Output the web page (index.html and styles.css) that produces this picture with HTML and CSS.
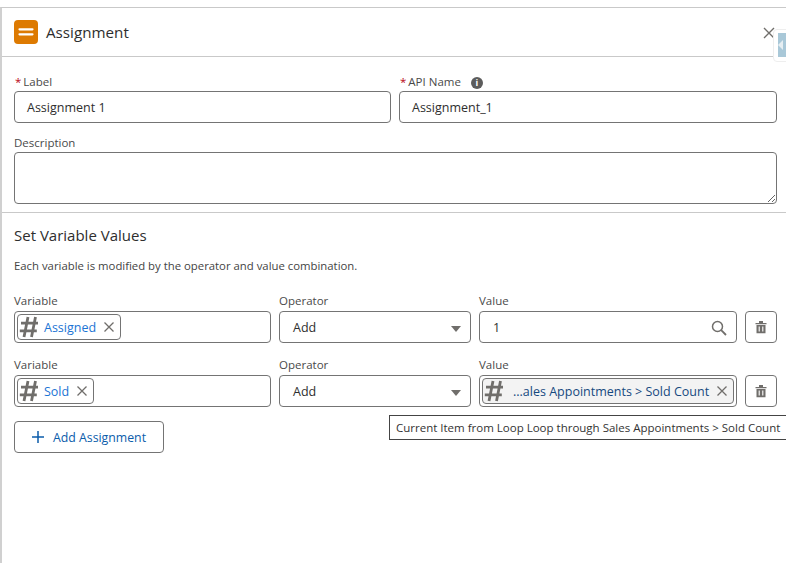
FILE: index.html
```html
<!DOCTYPE html>
<html lang="en">
<head>
<meta charset="utf-8">
<title>Assignment</title>
<link rel="stylesheet" href="styles.css">
</head>
<body>
<main class="panel">
  <header class="head">
    <span class="badge"><svg width="24" height="24" viewBox="0 0 24 24"><path d="M5.500 9.300h13M5.500 14.300h13" stroke="#fff" stroke-width="2.200" stroke-linecap="round"/></svg></span>
    <h1 class="title">Assignment</h1>
    <svg class="close" width="12" height="12" viewBox="0 0 12 12"><path d="M1 1l10 10M11 1L1 11" stroke="#706e6b" stroke-width="1.400"/></svg>
  </header>
  <div class="side-tab"><span class="side-inner"></span></div>

  <section class="basics">
    <div class="two">
      <div class="field">
        <div class="lab"><span class="req">*</span>Label</div>
        <div class="box">Assignment 1</div>
      </div>
      <div class="field">
        <div class="lab"><span class="req">*</span>API Name<span class="info">i</span></div>
        <div class="box">Assignment_1</div>
      </div>
    </div>
    <div class="field desc">
      <div class="lab">Description</div>
      <textarea class="area"></textarea>
    </div>
  </section>

  <section class="values">
    <h2 class="sub">Set Variable Values</h2>
    <p class="note">Each variable is modified by the operator and value combination.</p>

    <div class="row">
      <div class="field">
        <div class="lab">Variable</div>
        <div class="box pillbox">
          <span class="pill"><svg class="hash" width="20" height="22" viewBox="0 0 20 22"><path d="M9 1 5 21M16.500 1l-4 20M2 7.200h17M.8 14.800h17" stroke="#706e6b" stroke-width="2.800" fill="none"/></svg><span class="pill-text">Assigned</span><svg class="x" width="10" height="10" viewBox="0 0 10 10"><path d="M.5.5l9 9M9.500.5l-9 9" stroke="#706e6b" stroke-width="1.300"/></svg></span>
        </div>
      </div>
      <div class="field">
        <div class="lab">Operator</div>
        <div class="box select">Add<span class="caret"></span></div>
      </div>
      <div class="field">
        <div class="lab">Value</div>
        <div class="box select">1<svg class="search" width="16" height="16" viewBox="0 0 16 16"><circle cx="6.500" cy="6.500" r="5" fill="none" stroke="#706e6b" stroke-width="1.500"/><path d="M10.200 10.200l4.800 4.800" stroke="#706e6b" stroke-width="1.800"/></svg></div>
      </div>
      <button class="trash" type="button"><svg width="14" height="14" viewBox="0 0 14 14"><path d="M1.500 3h11v1.300h-11zM5 1h4v2H5zM2.500 5h9v8.200h-9z" fill="#706e6b"/><path d="M5.200 6.500v5M8.800 6.500v5" stroke="#fff" stroke-width="1.100"/></svg></button>
    </div>

    <div class="row">
      <div class="field">
        <div class="lab">Variable</div>
        <div class="box pillbox">
          <span class="pill"><svg class="hash" width="20" height="22" viewBox="0 0 20 22"><path d="M9 1 5 21M16.500 1l-4 20M2 7.200h17M.8 14.800h17" stroke="#706e6b" stroke-width="2.800" fill="none"/></svg><span class="pill-text">Sold</span><svg class="x" width="10" height="10" viewBox="0 0 10 10"><path d="M.5.5l9 9M9.500.5l-9 9" stroke="#706e6b" stroke-width="1.300"/></svg></span>
        </div>
      </div>
      <div class="field">
        <div class="lab">Operator</div>
        <div class="box select">Add<span class="caret"></span></div>
      </div>
      <div class="field">
        <div class="lab">Value</div>
        <div class="box pillbox">
          <span class="pill pill-full"><svg class="hash" width="20" height="22" viewBox="0 0 20 22"><path d="M9 1 5 21M16.500 1l-4 20M2 7.200h17M.8 14.800h17" stroke="#706e6b" stroke-width="2.800" fill="none"/></svg><span class="pill-text dark">...ales Appointments &gt; Sold Count</span><svg class="x" width="10" height="10" viewBox="0 0 10 10"><path d="M.5.5l9 9M9.500.5l-9 9" stroke="#706e6b" stroke-width="1.300"/></svg></span>
        </div>
      </div>
      <button class="trash" type="button"><svg width="14" height="14" viewBox="0 0 14 14"><path d="M1.500 3h11v1.300h-11zM5 1h4v2H5zM2.500 5h9v8.200h-9z" fill="#706e6b"/><path d="M5.200 6.500v5M8.800 6.500v5" stroke="#fff" stroke-width="1.100"/></svg></button>
    </div>

    <button class="add" type="button"><svg width="14" height="14" viewBox="0 0 14 14"><path d="M7 1v12M1 7h12" stroke="#0b5cab" stroke-width="1.500"/></svg>Add Assignment</button>
    <div class="tooltip">Current Item from Loop Loop through Sales Appointments &gt; Sold Count</div>
  </section>
</main>
</body>
</html>
```

FILE: styles.css
```css
* { box-sizing: border-box; }
html, body { margin: 0; height: 100%; overflow: hidden; background: #fff; }
body {
  font-family: "Open Sans", "Noto Sans", sans-serif;
  font-size: 12px;
  color: #2e2e2e;
  padding-top: 7px;
}
.panel {
  position: relative;
  height: 556px;
  border-top: 1px solid #c9c9c9;
  border-left: 2px solid #d0d0d0;
}
.head {
  height: 49px;
  border-bottom: 1px solid #c9c9c9;
  display: flex;
  align-items: center;
  padding: 0 12px;
  gap: 8px;
}
.badge {
  width: 24px;
  height: 24px;
  background: #dd7a01;
  border-radius: 4px;
  display: block;
}
.badge svg { display: block; }
.title { margin: 0; font-size: 15.200px; font-weight: 400; color: #2e2e2e; }
.close { position: absolute; right: 11px; top: 19px; }
.side-tab {
  position: absolute;
  right: -7px;
  top: 21px;
  width: 20px;
  height: 33px;
  background: #fff;
  border: 1px solid #eee;
  border-radius: 4px;
  padding: 3px 0 0 4px;
}
.side-inner {
  display: block;
  width: 16px;
  height: 24px;
  background: #a9c8d8;
}
.side-inner::before {
  content: "";
  display: block;
  width: 0;
  height: 0;
  transform: translateY(7px);
  border-top: 5px solid transparent;
  border-bottom: 5px solid transparent;
  border-right: 5px solid #e6eef2;
}
.basics {
  padding: 16px 8px 8px 12px;
  border-bottom: 1px solid #c9c9c9;
  height: 156px;
}
.two { display: grid; grid-template-columns: 377px 378px; gap: 8px; }
.lab {
  height: 18px;
  font-size: 11.500px;
  line-height: 18px;
  color: #4a4a4a;
  white-space: nowrap;
}
.row .lab { height: 19px; }
.req { color: #ba0517; margin: 0 2px 0 1px; }
.info {
  display: inline-block;
  width: 12px;
  height: 12px;
  margin-left: 10px;
  border-radius: 50%;
  background: #5c5c5c;
  color: #fff;
  font-size: 9px;
  font-weight: 700;
  line-height: 12px;
  text-align: center;
}
.box {
  position: relative;
  height: 32px;
  border: 1px solid #747474;
  border-radius: 4px;
  background: #fff;
  font-size: 12.500px;
  line-height: 32px;
  padding-left: 12px;
  color: #2e2e2e;
  white-space: nowrap;
}
.desc { margin-top: 11px; }
.area {
  display: block;
  width: 763px;
  height: 52px;
  margin: 0;
  border: 1px solid #747474;
  border-radius: 4px;
  background: #fff;
}
.values { padding: 12px 8px 0 12px; position: relative; }
.sub {
  margin: 0;
  font-size: 15px;
  line-height: 20px;
  font-weight: 400;
  color: #2e2e2e;
}
.note { margin: 12px 0 0; font-size: 11.350px; line-height: 18px; color: #444; }
.row {
  display: grid;
  grid-template-columns: 257px 192px 258px 32px;
  gap: 8px;
  align-items: end;
  margin-top: 17px;
  height: 51px;
}
.row + .row { margin-top: 13px; }
.select { padding-left: 13px; }
.caret {
  position: absolute;
  right: 9px;
  top: 14px;
  width: 0;
  height: 0;
  border-left: 5.500px solid transparent;
  border-right: 5.500px solid transparent;
  border-top: 6px solid #706e6b;
}
.search { position: absolute; right: 9px; top: 8px; }
.pillbox { padding: 2px; line-height: normal; display: flex; }
.pill {
  display: inline-flex;
  align-items: center;
  height: 26px;
  border: 1px solid #747474;
  border-radius: 4px;
  background: #fff;
  padding: 0 6px 0 1px;
}
.pill-full { flex: 1; background: #f3f3f3; }
.pill-text { color: #1b74d4; font-size: 12.500px; margin-left: 5px; flex: none; }
.pill-text.dark { color: #16497f; margin-left: 9px; }
.x { margin-left: 8px; flex: none; }
.trash {
  height: 32px;
  padding: 0;
  border: 1px solid #747474;
  border-radius: 4px;
  background: #fff;
  display: flex;
  align-items: center;
  justify-content: center;
}
.add {
  display: flex;
  align-items: center;
  gap: 8px;
  width: 150px;
  height: 32px;
  margin-top: 14px;
  padding: 0 0 0 16px;
  border: 1px solid #747474;
  border-radius: 4px;
  background: #fff;
  color: #0b5cab;
  font: 12.300px "Open Sans", "Noto Sans", sans-serif;
  white-space: nowrap;
}
.tooltip {
  position: absolute;
  left: 387px;
  top: 202px;
  width: 400px;
  height: 25px;
  border: 1px solid #444;
  background: #fff;
  font-size: 11.500px;
  line-height: 23px;
  padding-left: 6px;
  color: #333;
  white-space: nowrap;
}
```
